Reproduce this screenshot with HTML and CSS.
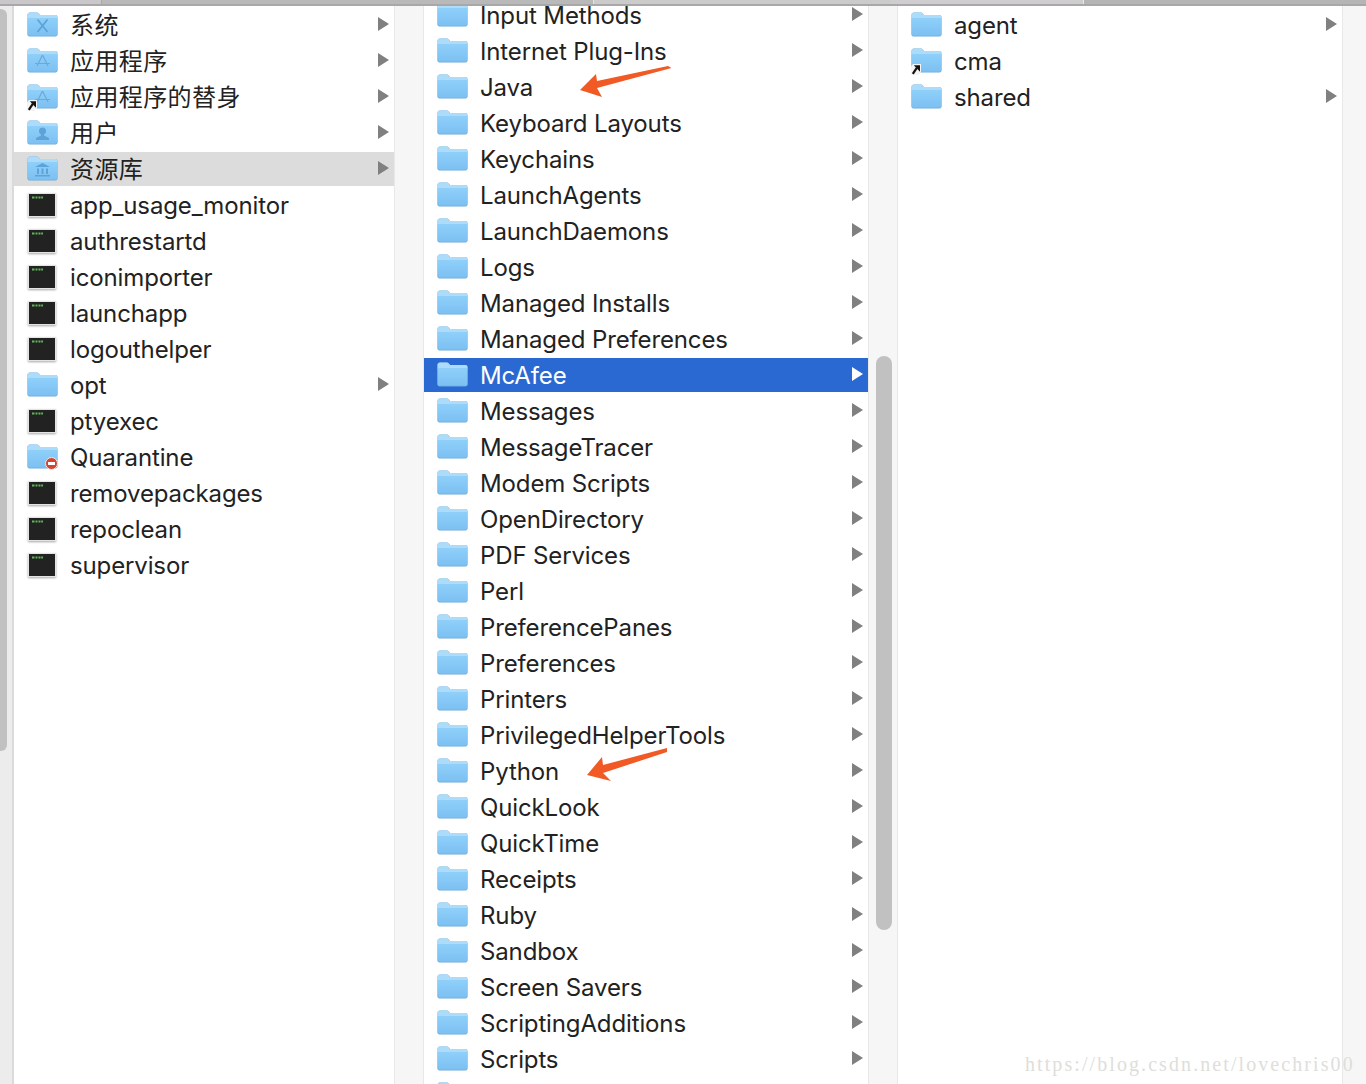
FILE: index.html
```html
<!DOCTYPE html>
<html lang="zh">
<head>
    <meta charset="UTF-8">
    <title>Finder</title>
    <link rel="stylesheet" href="styles.css">
</head>
<body>

    <svg class="defs" width="0" height="0">
        <defs>
            <linearGradient id="folderBody" x1="0" y1="0" x2="0" y2="1">
                <stop offset="0" stop-color="#8fd0fa"/>
                <stop offset="1" stop-color="#7cc0f2"/>
            </linearGradient>
        </defs>
        <symbol id="folder" viewBox="0 0 31 25">
            <path d="M0.500 3C0.500 1.600 1.500 0.500 3 0.500H9.500C10.700 0.500 11.500 1 12.300 2L13.100 3H28.500C29.600 3 30.500 3.900 30.500 5V22.500C30.500 23.600 29.600 24.500 28.500 24.500H2.500C1.400 24.500 0.500 23.600 0.500 22.500Z" fill="#6aa9d8"/>
            <path d="M0.500 3C0.500 1.600 1.500 0.500 3 0.500H9.500C10.700 0.500 11.500 1 12.300 2L13.100 3H28.500C29.600 3 30.500 3.900 30.500 5V6.500H0.500Z" fill="#acdcfa"/>
            <path d="M0.500 6H30.500V22C30.500 23 29.800 23.700 29 23.700H2C1.200 23.700 0.500 23 0.500 22Z" fill="url(#folderBody)"/>
        </symbol>
        <symbol id="link" viewBox="0 0 10 12">
            <path d="M0 12V3.500L2 1H10V9L8 12Z" fill="#f4f4f4"/>
            <path d="M1.800 10.800L5.800 4.800" stroke="#111" stroke-width="2.200" fill="none"/>
            <path d="M2.800 2.200H9V8.800Z" fill="#111"/>
        </symbol>
        <symbol id="exec" viewBox="0 0 28 24">
            <rect x="0" y="0" width="28" height="24" fill="#e4e4e4"/>
            <rect x="1" y="1" width="26" height="22" fill="#222"/>
            <path d="M4 4.500h2.500M7.500 4.500h2M10.500 4.500h2M13.200 4.500h1.800" stroke="#5cb85a" stroke-width="2"/>
        </symbol>
    </svg>

    <div class="topbar">
        <div class="seg seg-a"></div>
        <div class="seg seg-b"></div>
        <div class="seg seg-c"></div>
        <div class="seg seg-d"></div>
        <div class="seg seg-e"></div>
    </div>

    <div class="browser">
        <div class="gutter gutter-left"><div class="thumb thumb-left"></div></div>

        <div class="column col-1">
            <div class="row"><svg class="folder"><use href="#folder"/></svg><svg class="badge" viewBox="0 0 31 25"><path d="M10.500 7.500L20.500 20M20.500 7.500L10.500 20" stroke="#5ea3d8" stroke-width="1.800" fill="none"/></svg><span class="cjk">系统</span><i class="tri"></i></div>
            <div class="row"><svg class="folder"><use href="#folder"/></svg><svg class="badge" viewBox="0 0 31 25"><path d="M15.500 7L10 18M15.500 7L21 18M8 15.500H23" stroke="#6aa9da" stroke-width="1.200" fill="none"/></svg><span class="cjk">应用程序</span><i class="tri"></i></div>
            <div class="row"><svg class="folder"><use href="#folder"/></svg><svg class="badge" viewBox="0 0 31 25"><path d="M15.500 7L10 18M15.500 7L21 18M8 15.500H23" stroke="#6aa9da" stroke-width="1.200" fill="none"/></svg><svg class="link"><use href="#link"/></svg><span class="cjk">应用程序的替身</span><i class="tri"></i></div>
            <div class="row"><svg class="folder"><use href="#folder"/></svg><svg class="badge" viewBox="0 0 31 25"><circle cx="15.500" cy="11" r="3.500" fill="#5ea3d8"/><path d="M14 14H17V15.500L22 18V20H9V18L14 15.500Z" fill="#5ea3d8"/></svg><span class="cjk">用户</span><i class="tri"></i></div>
            <div class="row row-active"><svg class="folder"><use href="#folder"/></svg><svg class="badge" viewBox="0 0 31 25"><path d="M15.500 7L23 11H8ZM8 19H23V20.500H8ZM10 12.500H12V18H10ZM14.500 12.500H16.500V18H14.500ZM19 12.500H21V18H19Z" fill="#5ea3d8"/></svg><span class="cjk">资源库</span><i class="tri"></i></div>
            <div class="row"><svg class="exec"><use href="#exec"/></svg><span>app_usage_monitor</span></div>
            <div class="row"><svg class="exec"><use href="#exec"/></svg><span>authrestartd</span></div>
            <div class="row"><svg class="exec"><use href="#exec"/></svg><span>iconimporter</span></div>
            <div class="row"><svg class="exec"><use href="#exec"/></svg><span>launchapp</span></div>
            <div class="row"><svg class="exec"><use href="#exec"/></svg><span>logouthelper</span></div>
            <div class="row"><svg class="folder"><use href="#folder"/></svg><span>opt</span><i class="tri"></i></div>
            <div class="row"><svg class="exec"><use href="#exec"/></svg><span>ptyexec</span></div>
            <div class="row"><svg class="folder"><use href="#folder"/></svg><i class="no-entry"></i><span>Quarantine</span></div>
            <div class="row"><svg class="exec"><use href="#exec"/></svg><span>removepackages</span></div>
            <div class="row"><svg class="exec"><use href="#exec"/></svg><span>repoclean</span></div>
            <div class="row"><svg class="exec"><use href="#exec"/></svg><span>supervisor</span></div>
        </div>

        <div class="gutter gutter-mid"></div>

        <div class="column col-2">
            <div class="list-scrolled">
                <div class="row"><svg class="folder"><use href="#folder"/></svg><span>Input Methods</span><i class="tri"></i></div>
                <div class="row"><svg class="folder"><use href="#folder"/></svg><span>Internet Plug-Ins</span><i class="tri"></i></div>
                <div class="row"><svg class="folder"><use href="#folder"/></svg><span>Java</span><i class="tri"></i></div>
                <div class="row"><svg class="folder"><use href="#folder"/></svg><span>Keyboard Layouts</span><i class="tri"></i></div>
                <div class="row"><svg class="folder"><use href="#folder"/></svg><span>Keychains</span><i class="tri"></i></div>
                <div class="row"><svg class="folder"><use href="#folder"/></svg><span>LaunchAgents</span><i class="tri"></i></div>
                <div class="row"><svg class="folder"><use href="#folder"/></svg><span>LaunchDaemons</span><i class="tri"></i></div>
                <div class="row"><svg class="folder"><use href="#folder"/></svg><span>Logs</span><i class="tri"></i></div>
                <div class="row"><svg class="folder"><use href="#folder"/></svg><span>Managed Installs</span><i class="tri"></i></div>
                <div class="row"><svg class="folder"><use href="#folder"/></svg><span>Managed Preferences</span><i class="tri"></i></div>
                <div class="row row-selected"><svg class="folder"><use href="#folder"/></svg><span>McAfee</span><i class="tri"></i></div>
                <div class="row"><svg class="folder"><use href="#folder"/></svg><span>Messages</span><i class="tri"></i></div>
                <div class="row"><svg class="folder"><use href="#folder"/></svg><span>MessageTracer</span><i class="tri"></i></div>
                <div class="row"><svg class="folder"><use href="#folder"/></svg><span>Modem Scripts</span><i class="tri"></i></div>
                <div class="row"><svg class="folder"><use href="#folder"/></svg><span>OpenDirectory</span><i class="tri"></i></div>
                <div class="row"><svg class="folder"><use href="#folder"/></svg><span>PDF Services</span><i class="tri"></i></div>
                <div class="row"><svg class="folder"><use href="#folder"/></svg><span>Perl</span><i class="tri"></i></div>
                <div class="row"><svg class="folder"><use href="#folder"/></svg><span>PreferencePanes</span><i class="tri"></i></div>
                <div class="row"><svg class="folder"><use href="#folder"/></svg><span>Preferences</span><i class="tri"></i></div>
                <div class="row"><svg class="folder"><use href="#folder"/></svg><span>Printers</span><i class="tri"></i></div>
                <div class="row"><svg class="folder"><use href="#folder"/></svg><span>PrivilegedHelperTools</span><i class="tri"></i></div>
                <div class="row"><svg class="folder"><use href="#folder"/></svg><span>Python</span><i class="tri"></i></div>
                <div class="row"><svg class="folder"><use href="#folder"/></svg><span>QuickLook</span><i class="tri"></i></div>
                <div class="row"><svg class="folder"><use href="#folder"/></svg><span>QuickTime</span><i class="tri"></i></div>
                <div class="row"><svg class="folder"><use href="#folder"/></svg><span>Receipts</span><i class="tri"></i></div>
                <div class="row"><svg class="folder"><use href="#folder"/></svg><span>Ruby</span><i class="tri"></i></div>
                <div class="row"><svg class="folder"><use href="#folder"/></svg><span>Sandbox</span><i class="tri"></i></div>
                <div class="row"><svg class="folder"><use href="#folder"/></svg><span>Screen Savers</span><i class="tri"></i></div>
                <div class="row"><svg class="folder"><use href="#folder"/></svg><span>ScriptingAdditions</span><i class="tri"></i></div>
                <div class="row"><svg class="folder"><use href="#folder"/></svg><span>Scripts</span><i class="tri"></i></div>
                <div class="row"><svg class="folder"><use href="#folder"/></svg></div>
            </div>
        </div>

        <div class="gutter gutter-scroll"><div class="thumb thumb-mid"></div></div>

        <div class="column col-3">
            <div class="row"><svg class="folder"><use href="#folder"/></svg><span>agent</span><i class="tri"></i></div>
            <div class="row"><svg class="folder"><use href="#folder"/></svg><svg class="link"><use href="#link"/></svg><span>cma</span></div>
            <div class="row"><svg class="folder"><use href="#folder"/></svg><span>shared</span><i class="tri"></i></div>
        </div>

        <div class="gutter gutter-right"></div>
    </div>

    <svg class="mark mark-java" viewBox="0 0 96 36"><path d="M90 2L93.500 4L19 24L24 33L2 26L18 10L19 17Z" fill="#f15a24"/></svg>
    <svg class="mark mark-python" viewBox="0 0 84 36"><path d="M82 2L82 6L18 27L26 35L2 29L17 11L18 19Z" fill="#f15a24"/></svg>

    <div class="watermark">https://blog.csdn.net/lovechris00</div>

</body>
</html>
```

FILE: styles.css
```css
* {
    margin: 0;
    padding: 0;
    box-sizing: border-box;
}
html, body {
    height: 100%;
    overflow: hidden;
}
body {
    position: relative;
    display: flex;
    flex-direction: column;
    background: #fff;
    color: #222;
    font-family: 'Inter', 'Noto Sans CJK SC', sans-serif;
    font-size: 24px;
    letter-spacing: -0.13px;
}
.defs {
    position: absolute;
}
.topbar {
    display: flex;
    height: 6px;
    border-bottom: 2px solid #a8a8a8;
}
.seg-a { width: 101px; background: #c9c7c9; }
.seg-b { width: 492px; background: #b9b9b9; border-left: 1px solid #a8a8a8; }
.seg-c { width: 297px; background: #cbcbcb; border-left: 1px solid #e4e4e4; }
.seg-d { width: 193px; background: #cfcdcf; }
.seg-e { flex: 1; background: #b5b5b5; border-left: 1px solid #e8e8e8; }

.browser {
    flex: 1;
    display: flex;
    min-height: 0;
}
.gutter {
    background: #f6f6f6;
    border-left: 1px solid #e8e8e8;
    border-right: 1px solid #e8e8e8;
}
.gutter-left {
    width: 14px;
    padding-top: 3px;
    background: #ececec;
    border-left: none;
    border-right: 2px solid #dadada;
}
.gutter-mid { width: 30px; }
.gutter-scroll { width: 30px; padding-left: 7px; }
.gutter-right { flex: 1; border-right: none; }
.thumb {
    background: #c1c1c1;
}
.thumb-left {
    width: 7px;
    height: 742px;
    border-radius: 0 6px 6px 0;
}
.thumb-mid {
    width: 16px;
    height: 574px;
    margin-top: 350px;
    border-radius: 8px;
}

.column {
    overflow: hidden;
    padding-top: 2px;
}
.col-1 { width: 380px; }
.col-2 { width: 444px; padding-top: 0; }
.col-3 { width: 444px; }
.list-scrolled {
    margin-top: -8px;
}
.row {
    position: relative;
    display: flex;
    align-items: center;
    height: 34px;
    margin-bottom: 2px;
    padding-left: 56px;
    padding-right: 5px;
    white-space: nowrap;
}
.row-active { background: #dcdcdc; }
.row-selected { background: #2a69d2; color: #fff; }
.row span { flex: 1; padding-top: 1px; }
.row span.cjk { padding-top: 0; padding-bottom: 3px; letter-spacing: 0.4px; }
.folder, .badge {
    position: absolute;
    left: 13px;
    top: 4px;
    width: 31px;
    height: 25px;
}
.exec {
    position: absolute;
    left: 14px;
    top: 5px;
    width: 28px;
    height: 24px;
    filter: drop-shadow(0 1px 1px rgba(0,0,0,0.35));
}
.link {
    position: absolute;
    left: 13px;
    top: 19px;
    width: 10px;
    height: 12px;
}
.no-entry {
    position: absolute;
    left: 31px;
    top: 17px;
    width: 13px;
    height: 13px;
    border-radius: 50%;
    background: #d9422f;
    border: 1px solid #f2e6e4;
}
.no-entry::after {
    content: "";
    position: absolute;
    left: 2px;
    top: 4px;
    width: 7px;
    height: 3px;
    background: #fff;
}
.tri {
    width: 0;
    height: 0;
    margin-top: -2px;
    border-left: 11px solid #808080;
    border-top: 7px solid transparent;
    border-bottom: 7px solid transparent;
}
.row-selected .tri { border-left-color: #fff; }

.mark {
    position: absolute;
}
.mark-java { left: 578px; top: 64px; width: 96px; height: 36px; }
.mark-python { left: 585px; top: 746px; width: 84px; height: 36px; }

.watermark {
    position: absolute;
    left: 1025px;
    top: 1053px;
    color: #dededa;
    font-family: 'Liberation Serif', serif;
    font-size: 20px;
    letter-spacing: 2.08px;
    white-space: nowrap;
}
```
